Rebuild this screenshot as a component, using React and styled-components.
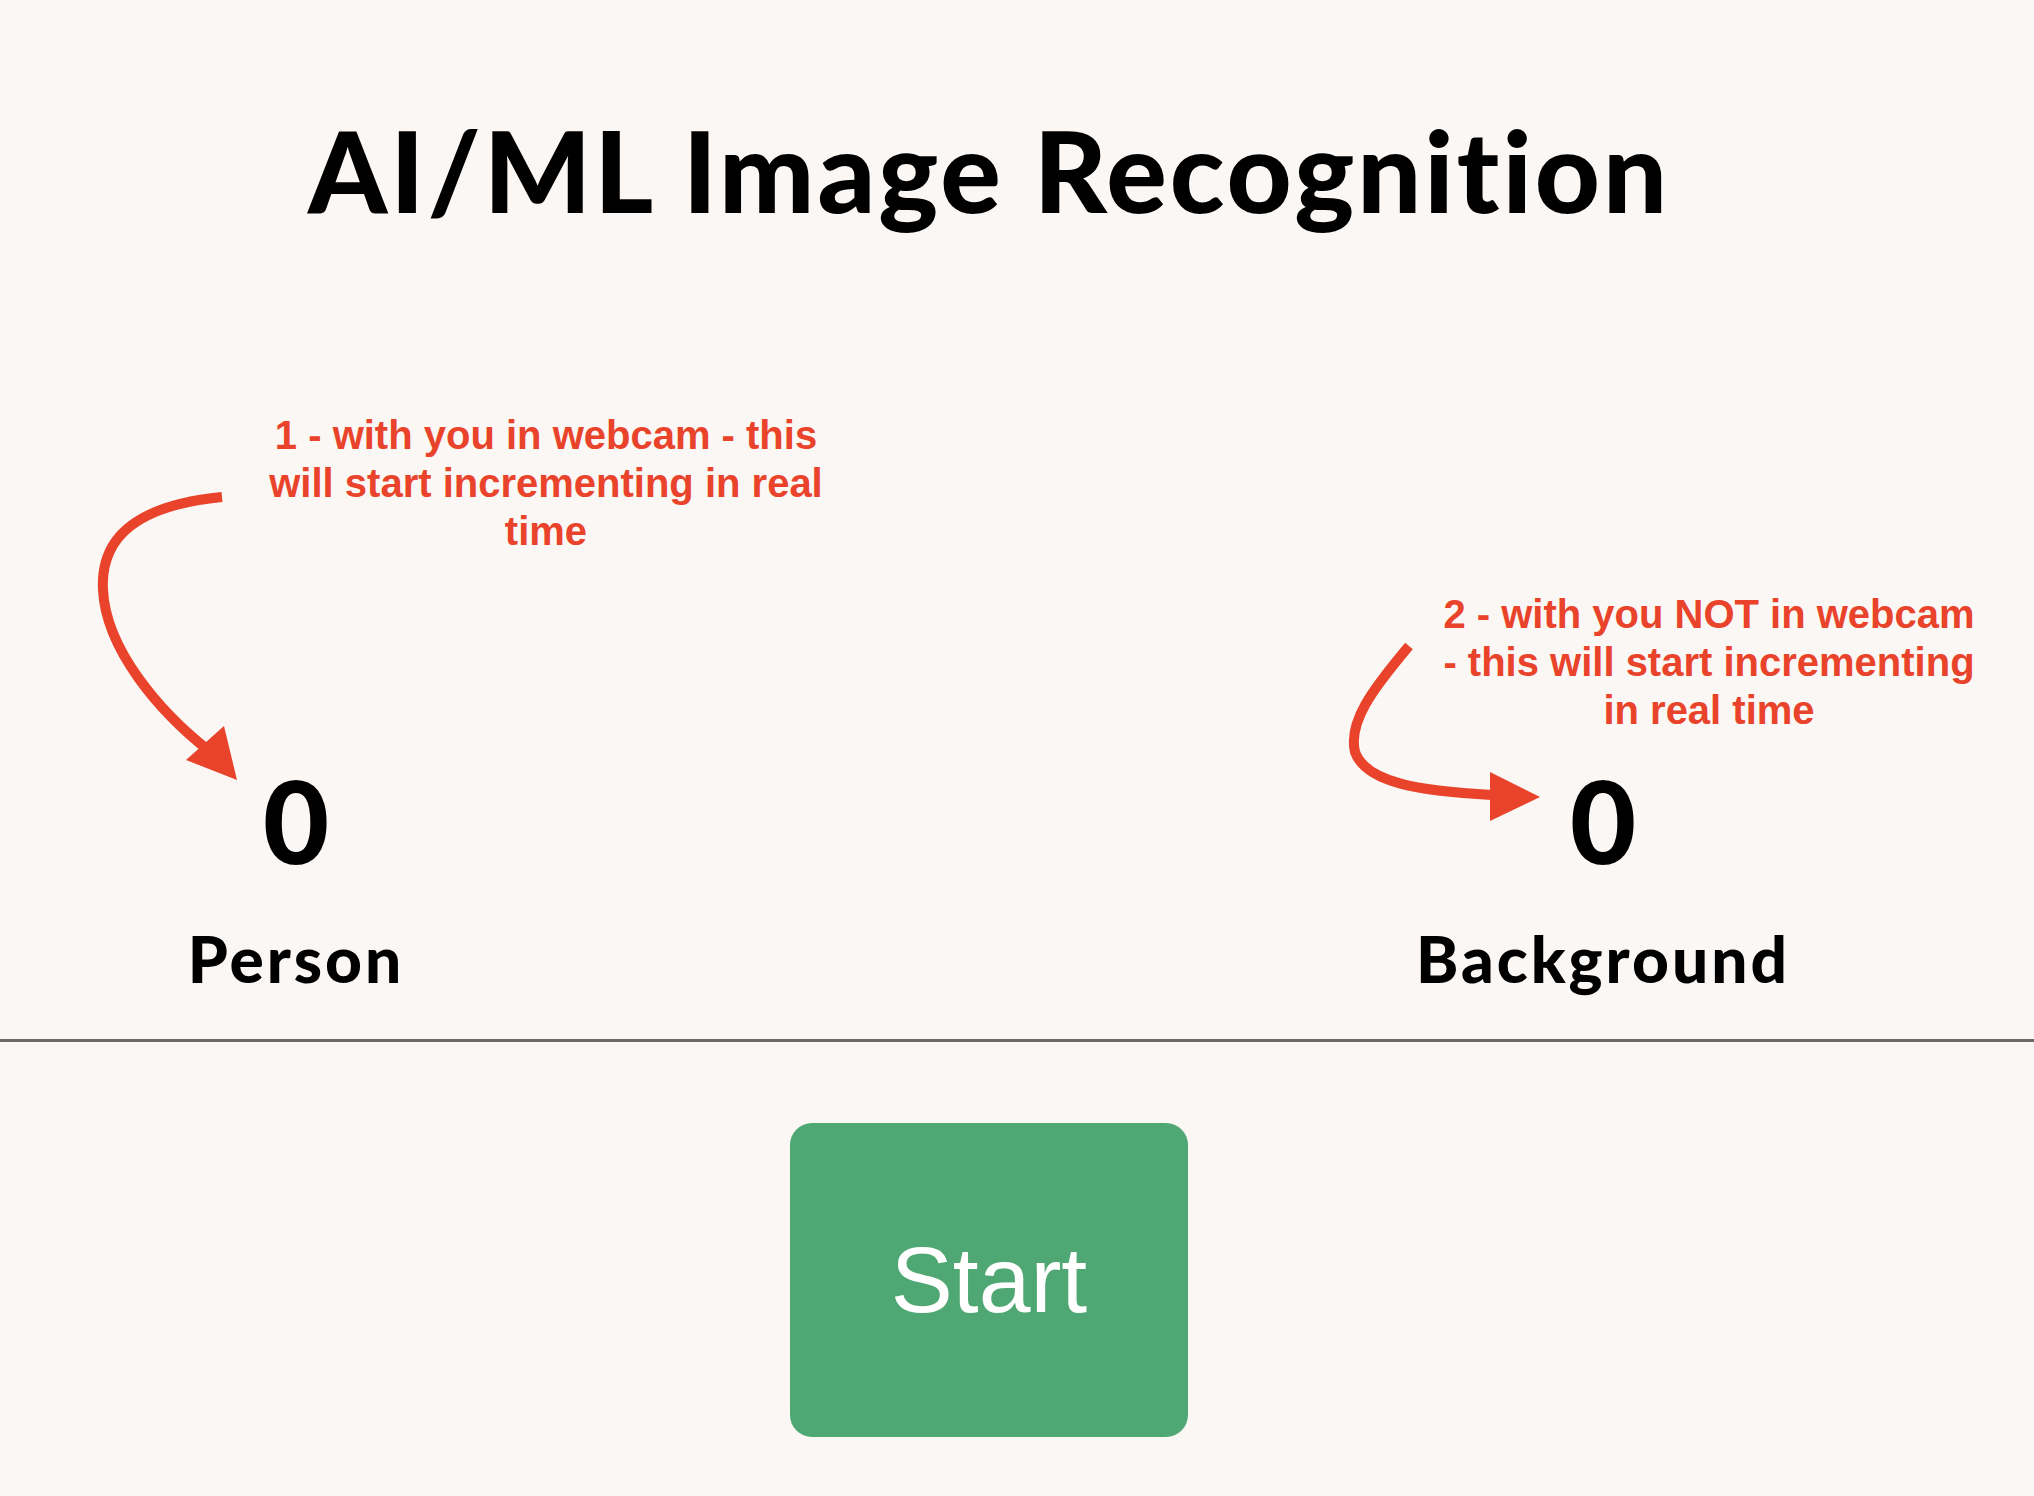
import React from "react";
import styled, { createGlobalStyle } from "styled-components";

const GlobalStyle = createGlobalStyle`
  html, body {
    margin: 0;
    padding: 0;
    background: #faf7f4;
  }
`;

const Page = styled.div`
  position: relative;
  display: flex;
  flex-direction: column;
  width: 100%;
  min-height: 100vh;
  background-color: #faf7f4;
  font-family: "Lato", "Noto Sans", sans-serif;
  color: #000;
`;

const Title = styled.h1`
  margin: 102px 0 0 0;
  padding-right: 56px;
  text-align: center;
  font-size: 113px;
  font-weight: 900;
  letter-spacing: 3px;
  line-height: 1.2;
`;

const Counters = styled.section`
  display: grid;
  grid-template-columns: 420px 420px;
  column-gap: 887px;
  padding: 514px 0 0 86px;
`;

const CounterColumn = styled.div`
  display: flex;
  flex-direction: column;
  align-items: center;
`;

const Count = styled.div`
  font-size: 114px;
  font-weight: 900;
  line-height: 1.2;
`;

const Label = styled.div`
  margin-top: 33px;
  font-size: 64px;
  font-weight: 900;
  letter-spacing: 3px;
  line-height: 1.2;
`;

const Divider = styled.hr`
  width: 100%;
  height: 3px;
  margin: 41px 0 0 0;
  border: none;
  background-color: #6b6b6b;
`;

const ButtonRow = styled.div`
  display: flex;
  justify-content: center;
  padding: 81px 56px 0 0;
`;

const StartButton = styled.button`
  width: 398px;
  height: 314px;
  border: none;
  border-radius: 22px;
  background-color: #4fa874;
  color: #fff;
  font-family: "Liberation Sans", Arial, sans-serif;
  font-size: 93px;
  font-weight: 400;
  cursor: pointer;
`;

const Note = styled.div`
  position: absolute;
  top: ${({ top }) => top}px;
  left: ${({ center }) => center}px;
  transform: translateX(-50%);
  color: #e9432b;
  font-family: "Liberation Sans", Arial, sans-serif;
  font-size: 40px;
  font-weight: 700;
  line-height: 48px;
  text-align: center;
  white-space: nowrap;
`;

const NoteLine = styled.span`
  display: block;
`;

const Overlay = styled.svg`
  position: absolute;
  top: 0;
  left: 0;
  pointer-events: none;
`;

const ARROW = "#e9432b";

const Arrows = () => (
  <Overlay width="2034" height="1100" viewBox="0 0 2034 1100">
    <path
      d="M222 497 C140 505 100 535 103 590 C106 650 160 712 208 750"
      fill="none"
      stroke={ARROW}
      strokeWidth="10"
    />
    <polygon points="237,780 186,760 224,726" fill={ARROW} />
    <path
      d="M1409 646 C1372 690 1348 722 1355 752 C1366 783 1420 791 1492 795"
      fill="none"
      stroke={ARROW}
      strokeWidth="10"
    />
    <polygon points="1540,797 1490,772 1490,821" fill={ARROW} />
  </Overlay>
);

const App = () => {
  const counters = [
    { label: "Person", count: 0 },
    { label: "Background", count: 0 },
  ];

  return (
    <Page>
      <GlobalStyle />
      <Title>AI/ML Image Recognition</Title>

      <Counters>
        {counters.map((c) => (
          <CounterColumn key={c.label}>
            <Count>{c.count}</Count>
            <Label>{c.label}</Label>
          </CounterColumn>
        ))}
      </Counters>

      <Divider />

      <ButtonRow>
        <StartButton>Start</StartButton>
      </ButtonRow>

      <Arrows />
      <Note top={411} center={546}>
        <NoteLine>1 - with you in webcam - this</NoteLine>
        <NoteLine>will start incrementing in real</NoteLine>
        <NoteLine>time</NoteLine>
      </Note>
      <Note top={590} center={1709}>
        <NoteLine>2 - with you NOT in webcam</NoteLine>
        <NoteLine>- this will start incrementing</NoteLine>
        <NoteLine>in real time</NoteLine>
      </Note>
    </Page>
  );
};

export default App;
